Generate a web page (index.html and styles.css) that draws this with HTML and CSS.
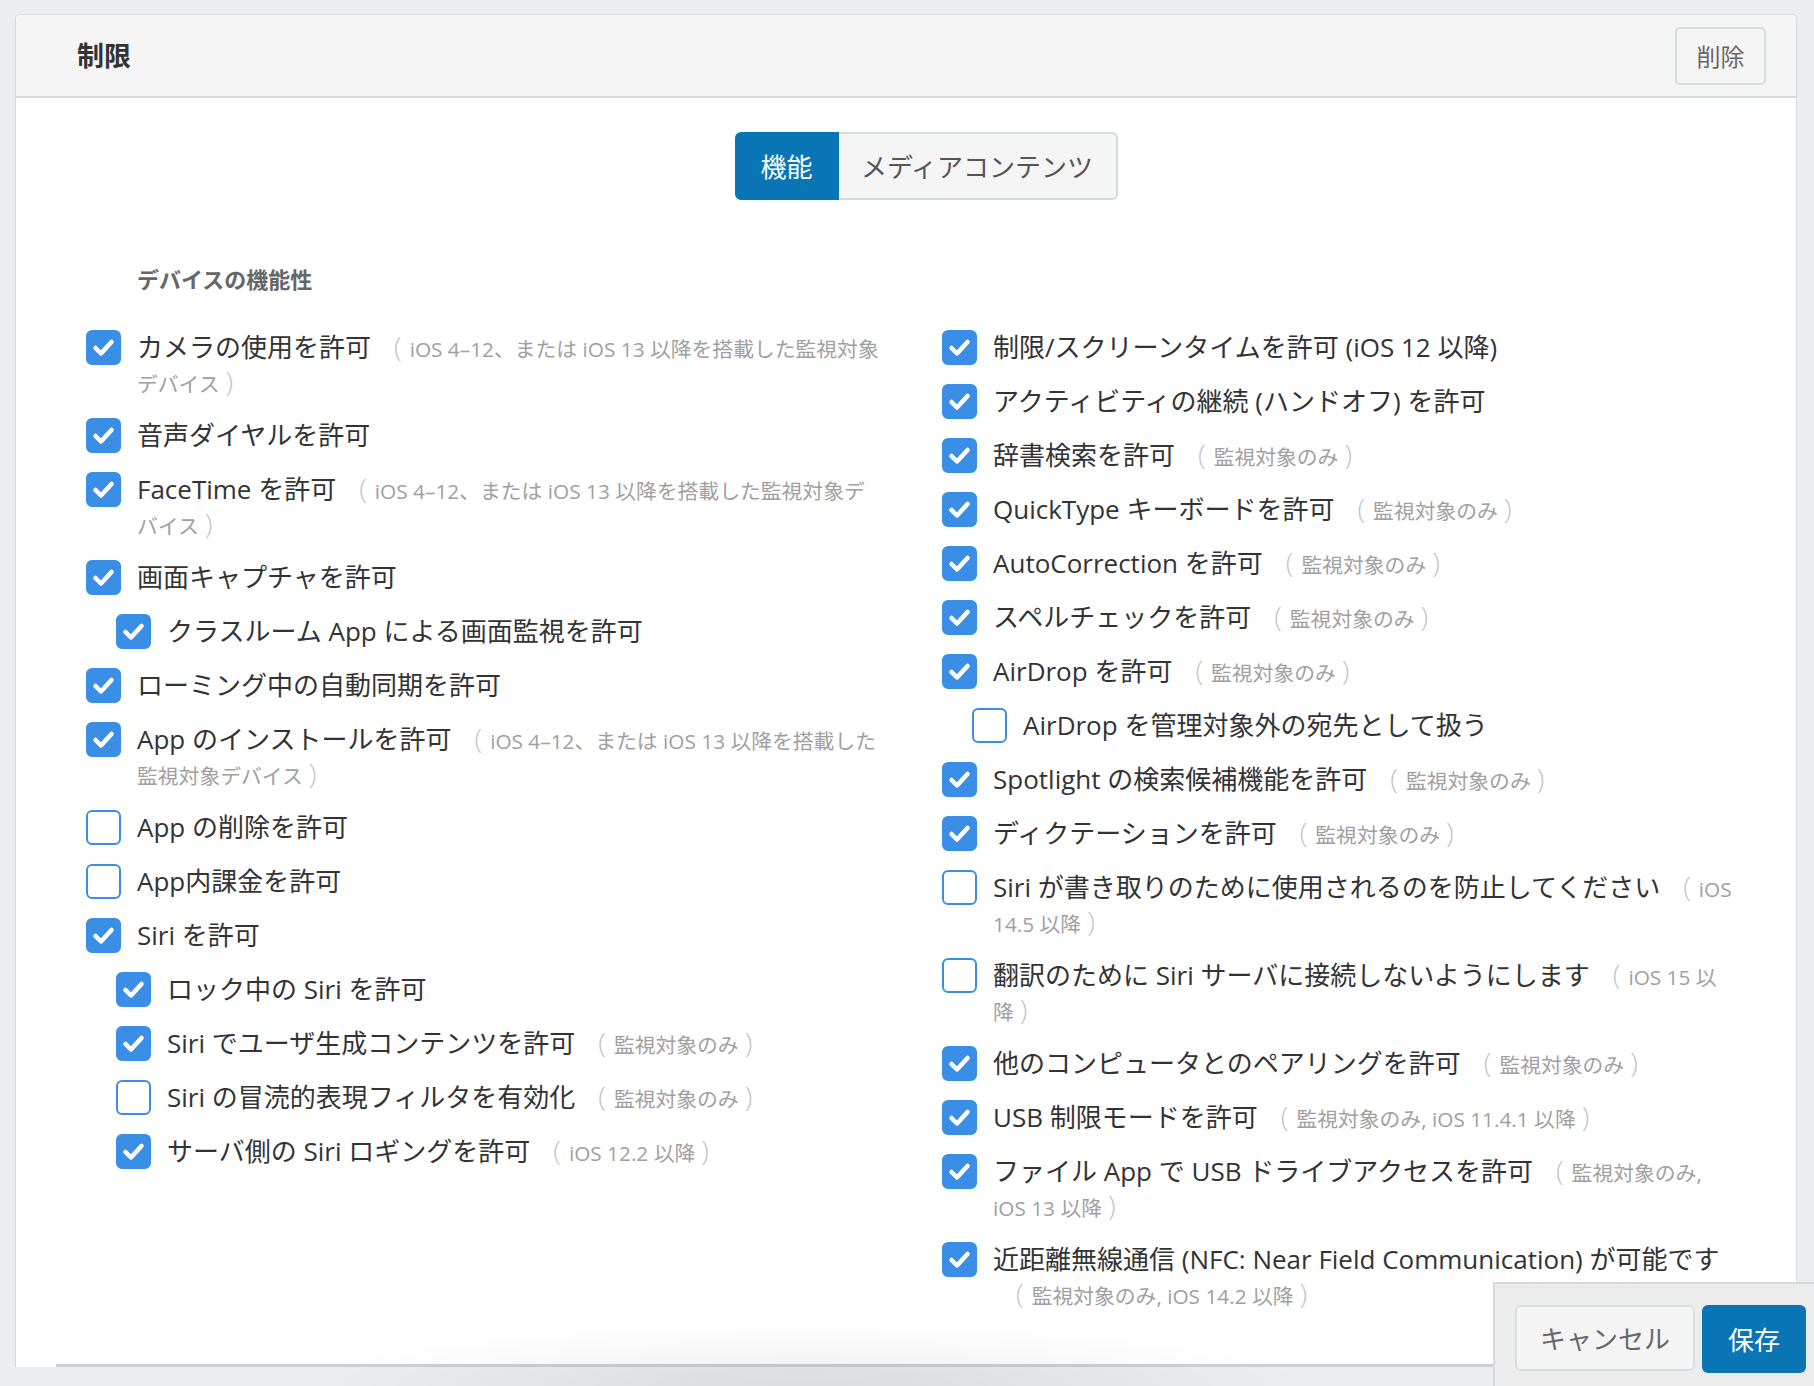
FILE: index.html
```html
<!DOCTYPE html>
<html lang="ja">
<head>
<meta charset="utf-8">
<title>制限</title>
<link rel="stylesheet" href="styles.css">
</head>
<body>
<div class="card">
  <header class="card-header">
    <h1 class="title">制限</h1>
    <button class="btn btn-delete">削除</button>
  </header>
  <div class="card-body">
    <div class="tabs">
      <button class="tab active">機能</button>
      <button class="tab">メディアコンテンツ</button>
    </div>
    <h2 class="section-title">デバイスの機能性</h2>
    <div class="columns">
      <div class="col">
        <div class="item"><span class="cb on"><svg viewBox="0 0 35 35"><path d="M9.5 18l5.5 5.5L25.5 12"/></svg></span><span class="label">カメラの使用を許可<span class="note"><span class="paren">(</span>iOS 4–12、または iOS 13 以降を搭載した監視対象デバイス<span class="paren">)</span></span></span></div>
        <div class="item"><span class="cb on"><svg viewBox="0 0 35 35"><path d="M9.5 18l5.5 5.5L25.5 12"/></svg></span><span class="label">音声ダイヤルを許可</span></div>
        <div class="item"><span class="cb on"><svg viewBox="0 0 35 35"><path d="M9.5 18l5.5 5.5L25.5 12"/></svg></span><span class="label">FaceTime を許可<span class="note"><span class="paren">(</span>iOS 4–12、または iOS 13 以降を搭載した監視対象デバイス<span class="paren">)</span></span></span></div>
        <div class="item"><span class="cb on"><svg viewBox="0 0 35 35"><path d="M9.5 18l5.5 5.5L25.5 12"/></svg></span><span class="label">画面キャプチャを許可</span></div>
        <div class="item sub"><span class="cb on"><svg viewBox="0 0 35 35"><path d="M9.5 18l5.5 5.5L25.5 12"/></svg></span><span class="label">クラスルーム App による画面監視を許可</span></div>
        <div class="item"><span class="cb on"><svg viewBox="0 0 35 35"><path d="M9.5 18l5.5 5.5L25.5 12"/></svg></span><span class="label">ローミング中の自動同期を許可</span></div>
        <div class="item"><span class="cb on"><svg viewBox="0 0 35 35"><path d="M9.5 18l5.5 5.5L25.5 12"/></svg></span><span class="label">App のインストールを許可<span class="note"><span class="paren">(</span>iOS 4–12、または iOS 13 以降を搭載した監視対象デバイス<span class="paren">)</span></span></span></div>
        <div class="item"><span class="cb"></span><span class="label">App の削除を許可</span></div>
        <div class="item"><span class="cb"></span><span class="label">App内課金を許可</span></div>
        <div class="item"><span class="cb on"><svg viewBox="0 0 35 35"><path d="M9.5 18l5.5 5.5L25.5 12"/></svg></span><span class="label">Siri を許可</span></div>
        <div class="item sub"><span class="cb on"><svg viewBox="0 0 35 35"><path d="M9.5 18l5.5 5.5L25.5 12"/></svg></span><span class="label">ロック中の Siri を許可</span></div>
        <div class="item sub"><span class="cb on"><svg viewBox="0 0 35 35"><path d="M9.5 18l5.5 5.5L25.5 12"/></svg></span><span class="label">Siri でユーザ生成コンテンツを許可<span class="note"><span class="paren">(</span>監視対象のみ<span class="paren">)</span></span></span></div>
        <div class="item sub"><span class="cb"></span><span class="label">Siri の冒涜的表現フィルタを有効化<span class="note"><span class="paren">(</span>監視対象のみ<span class="paren">)</span></span></span></div>
        <div class="item sub"><span class="cb on"><svg viewBox="0 0 35 35"><path d="M9.5 18l5.5 5.5L25.5 12"/></svg></span><span class="label">サーバ側の Siri ロギングを許可<span class="note"><span class="paren">(</span>iOS 12.2 以降<span class="paren">)</span></span></span></div>
      </div>
      <div class="col">
        <div class="item"><span class="cb on"><svg viewBox="0 0 35 35"><path d="M9.5 18l5.5 5.5L25.5 12"/></svg></span><span class="label">制限/スクリーンタイムを許可 (iOS 12 以降)</span></div>
        <div class="item"><span class="cb on"><svg viewBox="0 0 35 35"><path d="M9.5 18l5.5 5.5L25.5 12"/></svg></span><span class="label">アクティビティの継続 (ハンドオフ) を許可</span></div>
        <div class="item"><span class="cb on"><svg viewBox="0 0 35 35"><path d="M9.5 18l5.5 5.5L25.5 12"/></svg></span><span class="label">辞書検索を許可<span class="note"><span class="paren">(</span>監視対象のみ<span class="paren">)</span></span></span></div>
        <div class="item"><span class="cb on"><svg viewBox="0 0 35 35"><path d="M9.5 18l5.5 5.5L25.5 12"/></svg></span><span class="label">QuickType キーボードを許可<span class="note"><span class="paren">(</span>監視対象のみ<span class="paren">)</span></span></span></div>
        <div class="item"><span class="cb on"><svg viewBox="0 0 35 35"><path d="M9.5 18l5.5 5.5L25.5 12"/></svg></span><span class="label">AutoCorrection を許可<span class="note"><span class="paren">(</span>監視対象のみ<span class="paren">)</span></span></span></div>
        <div class="item"><span class="cb on"><svg viewBox="0 0 35 35"><path d="M9.5 18l5.5 5.5L25.5 12"/></svg></span><span class="label">スペルチェックを許可<span class="note"><span class="paren">(</span>監視対象のみ<span class="paren">)</span></span></span></div>
        <div class="item"><span class="cb on"><svg viewBox="0 0 35 35"><path d="M9.5 18l5.5 5.5L25.5 12"/></svg></span><span class="label">AirDrop を許可<span class="note"><span class="paren">(</span>監視対象のみ<span class="paren">)</span></span></span></div>
        <div class="item sub"><span class="cb"></span><span class="label">AirDrop を管理対象外の宛先として扱う</span></div>
        <div class="item"><span class="cb on"><svg viewBox="0 0 35 35"><path d="M9.5 18l5.5 5.5L25.5 12"/></svg></span><span class="label">Spotlight の検索候補機能を許可<span class="note"><span class="paren">(</span>監視対象のみ<span class="paren">)</span></span></span></div>
        <div class="item"><span class="cb on"><svg viewBox="0 0 35 35"><path d="M9.5 18l5.5 5.5L25.5 12"/></svg></span><span class="label">ディクテーションを許可<span class="note"><span class="paren">(</span>監視対象のみ<span class="paren">)</span></span></span></div>
        <div class="item"><span class="cb"></span><span class="label">Siri が書き取りのために使用されるのを防止してください<span class="note"><span class="paren">(</span>iOS 14.5 以降<span class="paren">)</span></span></span></div>
        <div class="item"><span class="cb"></span><span class="label">翻訳のために Siri サーバに接続しないようにします<span class="note"><span class="paren">(</span>iOS 15 以降<span class="paren">)</span></span></span></div>
        <div class="item"><span class="cb on"><svg viewBox="0 0 35 35"><path d="M9.5 18l5.5 5.5L25.5 12"/></svg></span><span class="label">他のコンピュータとのペアリングを許可<span class="note"><span class="paren">(</span>監視対象のみ<span class="paren">)</span></span></span></div>
        <div class="item"><span class="cb on"><svg viewBox="0 0 35 35"><path d="M9.5 18l5.5 5.5L25.5 12"/></svg></span><span class="label">USB 制限モードを許可<span class="note"><span class="paren">(</span>監視対象のみ, iOS 11.4.1 以降<span class="paren">)</span></span></span></div>
        <div class="item"><span class="cb on"><svg viewBox="0 0 35 35"><path d="M9.5 18l5.5 5.5L25.5 12"/></svg></span><span class="label">ファイル App で USB ドライブアクセスを許可<span class="note"><span class="paren">(</span>監視対象のみ, iOS 13 以降<span class="paren">)</span></span></span></div>
        <div class="item"><span class="cb on"><svg viewBox="0 0 35 35"><path d="M9.5 18l5.5 5.5L25.5 12"/></svg></span><span class="label">近距離無線通信 (NFC: Near Field Communication) が可能です<span class="note"><span class="paren">(</span>監視対象のみ, iOS 14.2 以降<span class="paren">)</span></span></span></div>
      </div>
    </div>
    <div class="divider"></div>
  </div>
</div>
<div class="footer-glow"></div>
<div class="footer-bar">
  <button class="btn btn-cancel">キャンセル</button>
  <button class="btn btn-save">保存</button>
</div>
</body>
</html>
```

FILE: styles.css
```css
* { box-sizing: border-box; }

html, body {
  margin: 0;
  padding: 0;
  height: 100%;
  overflow: hidden;
}

body {
  background: #eaeef0;
  font-family: "Open Sans", "Noto Sans CJK JP", sans-serif;
  color: #333;
}

.card {
  margin: 14px 17px 0 15px;
  background: #fff;
  border: 1px solid #d3dbde;
  border-bottom: none;
  border-radius: 5px 5px 0 0;
}

.card-header {
  height: 83px;
  background: #f5f5f5;
  border-bottom: 2px solid #d3dbde;
  border-radius: 5px 5px 0 0;
  display: flex;
  align-items: center;
  justify-content: space-between;
  padding: 0 30px 0 61px;
}

.title {
  margin: 0 0 3px;
  font-size: 27px;
  font-weight: 700;
  color: #333;
}

.btn {
  font-family: inherit;
  cursor: pointer;
}

.btn-delete {
  width: 91px;
  height: 58px;
  background: #f5f5f5;
  border: 2px solid #d5dde0;
  border-radius: 5px;
  font-size: 24px;
  color: #666;
  padding: 0;
}

.card-body {
  padding-top: 34px;
}

.tabs {
  display: flex;
  justify-content: center;
  margin-left: 40px;
}

.tab {
  height: 68px;
  font-family: inherit;
  font-size: 26px;
  padding: 0;
  border: 2px solid #d3dbde;
  background: #f5f5f5;
  color: #555;
}

.tab.active {
  width: 104px;
  background: #0a75b4;
  border-color: #0a75b4;
  color: #fff;
  border-radius: 6px 0 0 6px;
}

.tab:not(.active) {
  width: 279px;
  border-left: none;
  border-radius: 0 6px 6px 0;
}

.section-title {
  margin: 64px 0 0 121px;
  font-size: 22px;
  line-height: 30px;
  font-weight: 700;
  color: #666;
}

.columns {
  display: grid;
  grid-template-columns: 798px 794px;
  column-gap: 58px;
  padding-left: 70px;
  margin-top: 36px;
}

.col {
  display: flex;
  flex-direction: column;
  gap: 19px;
}

.item {
  display: flex;
  align-items: flex-start;
  gap: 16px;
}

.item.sub {
  padding-left: 30px;
}

.cb {
  flex: none;
  width: 35px;
  height: 35px;
  border: 2px solid #3a8ee6;
  border-radius: 6px;
  background: #fff;
  display: flex;
  align-items: center;
  justify-content: center;
}

.cb.on {
  background: #3a8ee6;
}

.cb svg {
  width: 35px;
  height: 35px;
  flex: none;
  fill: none;
  stroke: #fff;
  stroke-width: 4.5;
  stroke-linecap: round;
  stroke-linejoin: round;
}

.label {
  font-size: 26px;
  line-height: 34.5px;
  color: #333;
}

.note {
  margin-left: 23px;
  font-size: 20.8px;
  line-height: 16px;
  color: #a0a0a0;
}

.paren {
  font-size: 28px;
  line-height: 16px;
  color: #c4c4c4;
  font-weight: 300;
}

.paren:first-child {
  margin-right: 8px;
}

.paren:last-child {
  margin-left: 6px;
}

.divider {
  margin: 53px 0 0 40px;
  width: 1700px;
  border-top: 3px solid #cfcfcf;
}

.footer-glow {
  position: fixed;
  left: 300px;
  bottom: 0;
  width: 1010px;
  height: 90px;
  pointer-events: none;
  background: radial-gradient(ellipse 50% 70% at 50% 100%, rgba(0, 0, 0, 0.07), rgba(0, 0, 0, 0));
}

.footer-bar {
  position: fixed;
  right: 0;
  bottom: 0;
  width: 321px;
  height: 104px;
  background: #ececec;
  border-top: 2px solid #d5dadc;
  border-left: 2px solid #d5dadc;
  display: flex;
  align-items: flex-start;
  gap: 7px;
  padding: 21px 0 0 20px;
}

.btn-cancel {
  width: 180px;
  height: 66px;
  background: #f4f4f4;
  border: 2px solid #d7dfe2;
  border-radius: 6px;
  font-size: 26px;
  color: #666;
  padding: 0;
}

.btn-save {
  width: 104px;
  height: 68px;
  background: #0a75b4;
  border: none;
  border-radius: 6px;
  font-size: 26px;
  color: #fff;
  padding: 0;
}
```
